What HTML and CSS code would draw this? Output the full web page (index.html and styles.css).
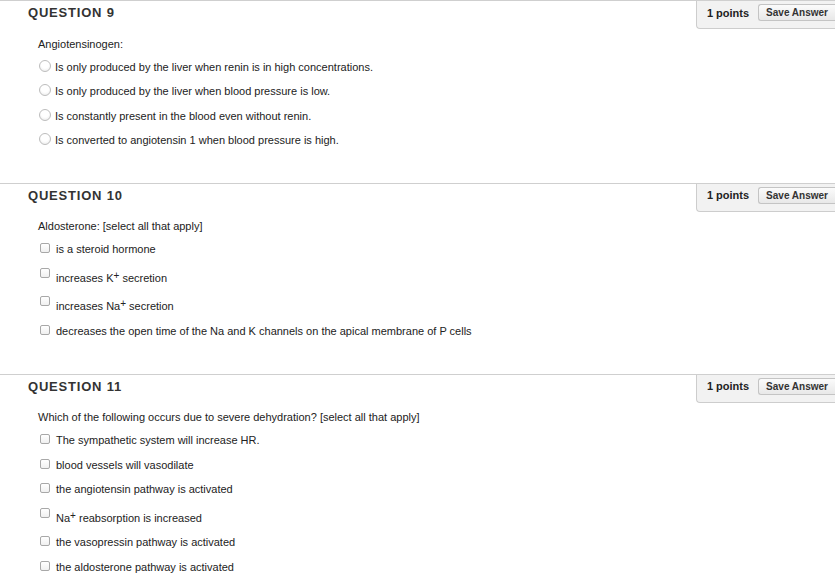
FILE: index.html
```html
<!DOCTYPE html>
<html>
<head>
<meta charset="utf-8">
<title>Questions</title>
<link rel="stylesheet" href="styles.css">
</head>
<body>
<div class="page">
  <section class="question">
    <div class="q-head">
      <h3 class="q-title">QUESTION 9</h3>
      <div class="q-points"><span class="pts">1 points</span><button class="save">Save Answer</button></div>
    </div>
    <div class="q-body">
      <p class="q-text">Angiotensinogen:</p>
      <ul class="options">
        <li class="opt"><span class="radio"></span><span class="label">Is only produced by the liver when renin is in high concentrations.</span></li>
        <li class="opt"><span class="radio"></span><span class="label">Is only produced by the liver when blood pressure is low.</span></li>
        <li class="opt"><span class="radio"></span><span class="label">Is constantly present in the blood even without renin.</span></li>
        <li class="opt"><span class="radio"></span><span class="label">Is converted to angiotensin 1 when blood pressure is high.</span></li>
      </ul>
    </div>
  </section>

  <section class="question">
    <div class="q-head">
      <h3 class="q-title">QUESTION 10</h3>
      <div class="q-points"><span class="pts">1 points</span><button class="save">Save Answer</button></div>
    </div>
    <div class="q-body">
      <p class="q-text">Aldosterone: [select all that apply]</p>
      <ul class="options">
        <li class="opt"><span class="check"></span><span class="label">is a steroid hormone</span></li>
        <li class="opt"><span class="check"></span><span class="label label-sup">increases K<sup>+</sup> secretion</span></li>
        <li class="opt"><span class="check"></span><span class="label label-sup">increases Na<sup>+</sup> secretion</span></li>
        <li class="opt"><span class="check"></span><span class="label">decreases the open time of the Na and K channels on the apical membrane of P cells</span></li>
      </ul>
    </div>
  </section>

  <section class="question">
    <div class="q-head">
      <h3 class="q-title">QUESTION 11</h3>
      <div class="q-points"><span class="pts">1 points</span><button class="save">Save Answer</button></div>
    </div>
    <div class="q-body">
      <p class="q-text">Which of the following occurs due to severe dehydration? [select all that apply]</p>
      <ul class="options">
        <li class="opt"><span class="check"></span><span class="label">The sympathetic system will increase HR.</span></li>
        <li class="opt"><span class="check"></span><span class="label">blood vessels will vasodilate</span></li>
        <li class="opt"><span class="check"></span><span class="label">the angiotensin pathway is activated</span></li>
        <li class="opt"><span class="check"></span><span class="label label-sup">Na<sup>+</sup> reabsorption is increased</span></li>
        <li class="opt"><span class="check"></span><span class="label">the vasopressin pathway is activated</span></li>
        <li class="opt"><span class="check"></span><span class="label">the aldosterone pathway is activated</span></li>
      </ul>
    </div>
  </section>
</div>
</body>
</html>
```
FILE: styles.css
```css
html, body {
  margin: 0;
  padding: 0;
  background: #fff;
}
body {
  font-family: "Liberation Sans", Arial, sans-serif;
  font-size: 11px;
  color: #222;
  overflow: hidden;
}
.page {
  width: 835px;
}
.question {
  border-top: 1px solid #cfcfcf;
  padding-bottom: 34.5px;
}
.q-head {
  display: flex;
  justify-content: space-between;
  align-items: flex-start;
}
.q-title {
  margin: 0;
  padding: 3px 0 0 28px;
  font-size: 13px;
  line-height: 17px;
  font-weight: bold;
  letter-spacing: 0.8px;
  color: #333;
}
.q-points {
  display: flex;
  align-items: center;
  background: #f2f2f2;
  border: 1px solid #cdcdcd;
  border-top: 0;
  border-right: 0;
  border-bottom-left-radius: 4px;
  padding: 3px 0 7px 10px;
}
.pts {
  font-weight: bold;
  font-size: 11px;
  color: #222;
  margin-right: 9px;
}
.save {
  height: 17px;
  margin: 0;
  padding: 0 7px;
  border: 1px solid #c4c4c4;
  border-right: 0;
  border-radius: 3px 0 0 3px;
  background: linear-gradient(#fbfbfb, #e8e8e8);
  font: bold 10px "Liberation Sans", Arial, sans-serif;
  color: #333;
}
.q-body {
  padding-left: 38px;
}
.q-text {
  margin: 7.5px 0 0;
  line-height: 15px;
}
.options {
  list-style: none;
  margin: 8px 0 0;
  padding: 0 0 0 2px;
}
.opt {
  display: flex;
  align-items: flex-start;
  margin-bottom: 9.6px;
}
.opt:last-child {
  margin-bottom: 0;
}
.label {
  line-height: 15px;
}
.label-sup {
  padding-top: 4px;
}
.label sup {
  font-size: 10px;
  line-height: 0;
  vertical-align: 3px;
}
.radio {
  flex: none;
  width: 12px;
  height: 12px;
  box-sizing: border-box;
  margin: 0 4px 0 -1px;
  border-radius: 50%;
  border: 1px solid #bdbdbd;
  background: radial-gradient(circle at 50% 35%, #ffffff 45%, #e6e6e6 100%);
}
.check {
  flex: none;
  width: 10px;
  height: 10px;
  box-sizing: border-box;
  margin: 1px 6px 0 0;
  border-radius: 2px;
  border: 1px solid #a8a8a8;
  background: linear-gradient(#ffffff, #f0f0f0);
}
```
